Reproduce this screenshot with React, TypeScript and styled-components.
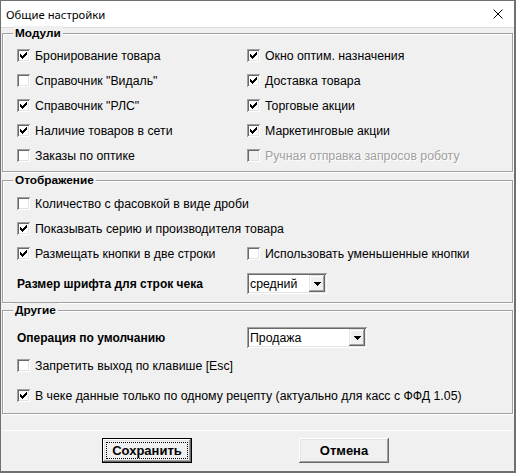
import React from 'react';
import styled, { createGlobalStyle } from 'styled-components';

const GlobalStyle = createGlobalStyle`
  html, body {
    margin: 0;
    padding: 0;
    background: #f0f0f0;
  }
  * {
    box-sizing: border-box;
  }
`;

const Window = styled.div`
  width: 516px;
  height: 473px;
  display: flex;
  flex-direction: column;
  background: #f0f0f0;
  border: 1px solid #707070;
  border-right-width: 2px;
  border-bottom-width: 2px;
  font-family: "Liberation Sans", Arial, sans-serif;
  font-size: 12.3px;
  color: #000;
`;

const TitleBar = styled.div`
  height: 26px;
  flex: none;
  display: flex;
  align-items: center;
  justify-content: space-between;
  padding: 0 11px 0 5px;
  background: #fff;
  font-family: "Noto Sans", "Open Sans", sans-serif;
  font-size: 11.3px;
`;

const Body = styled.div`
  flex: 1;
  display: flex;
  flex-direction: column;
  padding: 5px 1px 0 1px;
  border-top: 1px solid #dadada;
`;

const Group = styled.div<{ $pt: number; $pb: number; $mt: number }>`
  position: relative;
  margin-top: ${p => p.$mt}px;
  padding: ${p => p.$pt}px 0 ${p => p.$pb}px 14px;
  border: 1px solid #a0a0a0;
  box-shadow: inset 1px 1px 0 #fff, 1px 1px 0 #fff;
`;

const Caption = styled.span`
  position: absolute;
  left: 10px;
  top: -8px;
  padding: 0 2px;
  line-height: 14px;
  font-size: 11.8px;
  font-weight: bold;
  background: #f0f0f0;
`;

const Columns = styled.div`
  display: grid;
  grid-template-columns: 230px 1fr;
  grid-auto-rows: 25px;
`;

const Stack = styled.div<{ $gap: number }>`
  display: flex;
  flex-direction: column;
  gap: ${p => p.$gap}px;
`;

const CheckRow = styled.label<{ $wide?: boolean; $disabled?: boolean }>`
  display: flex;
  align-items: center;
  gap: 5px;
  height: 25px;
  white-space: nowrap;
  grid-column: ${p => (p.$wide ? '1 / -1' : 'auto')};
  color: ${p => (p.$disabled ? '#a0a0a0' : '#000')};
  text-shadow: ${p => (p.$disabled ? '1px 1px 0 #fff' : 'none')};
`;

const Box = styled.span<{ $disabled?: boolean }>`
  width: 13px;
  height: 13px;
  flex: none;
  display: flex;
  background: ${p => (p.$disabled ? '#f0f0f0' : '#fff')};
  box-shadow: inset 1px 1px 0 #a0a0a0, inset -1px -1px 0 #fff,
    inset 2px 2px 0 #696969, inset -2px -2px 0 #e3e3e3;
`;

const FieldRow = styled.div<{ $mt?: number }>`
  display: grid;
  grid-template-columns: 230px auto;
  align-items: center;
  height: 21px;
  margin-top: ${p => p.$mt ?? 0}px;
`;

const FieldLabel = styled.span`
  font-size: 12px;
  font-weight: bold;
`;

const Combo = styled.div<{ $width: number }>`
  width: ${p => p.$width}px;
  height: 21px;
  display: flex;
  align-items: center;
  justify-content: space-between;
  padding: 2px;
  background: #fff;
  box-shadow: inset 1px 1px 0 #a0a0a0, inset -1px -1px 0 #fff,
    inset 2px 2px 0 #696969, inset -2px -2px 0 #e3e3e3;
`;

const ComboText = styled.span`
  padding-left: 1px;
`;

const DropButton = styled.span`
  width: 16px;
  height: 17px;
  display: flex;
  align-items: center;
  justify-content: center;
  background: #f0f0f0;
  box-shadow: inset -1px -1px 0 #696969, inset 1px 1px 0 #e3e3e3,
    inset -2px -2px 0 #a0a0a0, inset 2px 2px 0 #fff;
`;

const ButtonBar = styled.div`
  margin-top: auto;
  height: 41px;
  flex: none;
  display: flex;
  align-items: flex-start;
  gap: 107px;
  padding: 7px 0 0 100px;
  border-top: 1px solid #fff;
`;

const Button = styled.button<{ $default?: boolean }>`
  position: relative;
  width: 90px;
  height: 25px;
  padding: 0;
  font: bold 13px "Liberation Sans", Arial, sans-serif;
  color: #000;
  background: #f0f0f0;
  border: ${p => (p.$default ? '1px solid #000' : 'none')};
  box-shadow: inset -1px -1px 0 #696969, inset 1px 1px 0 #fff,
    inset -2px -2px 0 #a0a0a0, inset 2px 2px 0 #e3e3e3;

  &::after {
    content: '';
    display: ${p => (p.$default ? 'block' : 'none')};
    position: absolute;
    inset: 3px;
    border: 1px dotted #000;
  }
`;

// classic pixel checkmark
const checkTops = [5, 6, 7, 6, 5, 4, 3];

const CheckMark = () => (
  <svg width="13" height="13" viewBox="0 0 13 13" shapeRendering="crispEdges">
    {checkTops.map((y, i) => (
      <rect key={i} x={3 + i} y={y} width="1" height="3" fill="#000" />
    ))}
  </svg>
);

const Arrow = () => (
  <svg width="7" height="4" viewBox="0 0 7 4" shapeRendering="crispEdges">
    <rect x="0" y="0" width="7" height="1" fill="#000" />
    <rect x="1" y="1" width="5" height="1" fill="#000" />
    <rect x="2" y="2" width="3" height="1" fill="#000" />
    <rect x="3" y="3" width="1" height="1" fill="#000" />
  </svg>
);

const CloseIcon = () => (
  <svg width="10" height="10" viewBox="0 0 10 10">
    <path d="M0.5 0.5L9.5 9.5M9.5 0.5L0.5 9.5" stroke="#000" strokeWidth="1" />
  </svg>
);

interface CheckProps {
  label: string;
  checked?: boolean;
  disabled?: boolean;
  wide?: boolean;
}

const Check = ({ label, checked, disabled, wide }: CheckProps) => (
  <CheckRow $wide={wide} $disabled={disabled}>
    <Box $disabled={disabled}>{checked && <CheckMark />}</Box>
    {label}
  </CheckRow>
);

const modules: CheckProps[] = [
  { label: 'Бронирование товара', checked: true },
  { label: 'Окно оптим. назначения', checked: true },
  { label: 'Справочник "Видаль"' },
  { label: 'Доставка товара', checked: true },
  { label: 'Справочник "РЛС"', checked: true },
  { label: 'Торговые акции', checked: true },
  { label: 'Наличие товаров в сети', checked: true },
  { label: 'Маркетинговые акции', checked: true },
  { label: 'Заказы по оптике' },
  { label: 'Ручная отправка запросов роботу', disabled: true },
];

const App = () => {
  return (
    <>
      <GlobalStyle />
      <Window>
        <TitleBar>
          <span>Общие настройки</span>
          <CloseIcon />
        </TitleBar>
        <Body>
          <Group $mt={0} $pt={9} $pb={3}>
            <Caption>Модули</Caption>
            <Columns>
              {modules.map(m => (
                <Check key={m.label} {...m} />
              ))}
            </Columns>
          </Group>

          <Group $mt={8} $pt={10} $pb={8}>
            <Caption>Отображение</Caption>
            <Columns>
              <Check wide label="Количество с фасовкой в виде дроби" />
              <Check wide checked label="Показывать серию и производителя товара" />
              <Check checked label="Размещать кнопки в две строки" />
              <Check label="Использовать уменьшенные кнопки" />
            </Columns>
            <FieldRow $mt={7}>
              <FieldLabel>Размер шрифта для строк чека</FieldLabel>
              <Combo $width={80}>
                <ComboText>средний</ComboText>
                <DropButton>
                  <Arrow />
                </DropButton>
              </Combo>
            </FieldRow>
          </Group>

          <Group $mt={7} $pt={16} $pb={5}>
            <Caption>Другие</Caption>
            <Stack $gap={5}>
              <FieldRow>
                <FieldLabel>Операция по умолчанию</FieldLabel>
                <Combo $width={120}>
                  <ComboText>Продажа</ComboText>
                  <DropButton>
                    <Arrow />
                  </DropButton>
                </Combo>
              </FieldRow>
              <Check label="Запретить выход по клавише [Esc]" />
              <Check checked label="В чеке данные только по одному рецепту (актуально для касс с ФФД 1.05)" />
            </Stack>
          </Group>

          <ButtonBar>
            <Button $default>Сохранить</Button>
            <Button>Отмена</Button>
          </ButtonBar>
        </Body>
      </Window>
    </>
  );
};

export default App;
